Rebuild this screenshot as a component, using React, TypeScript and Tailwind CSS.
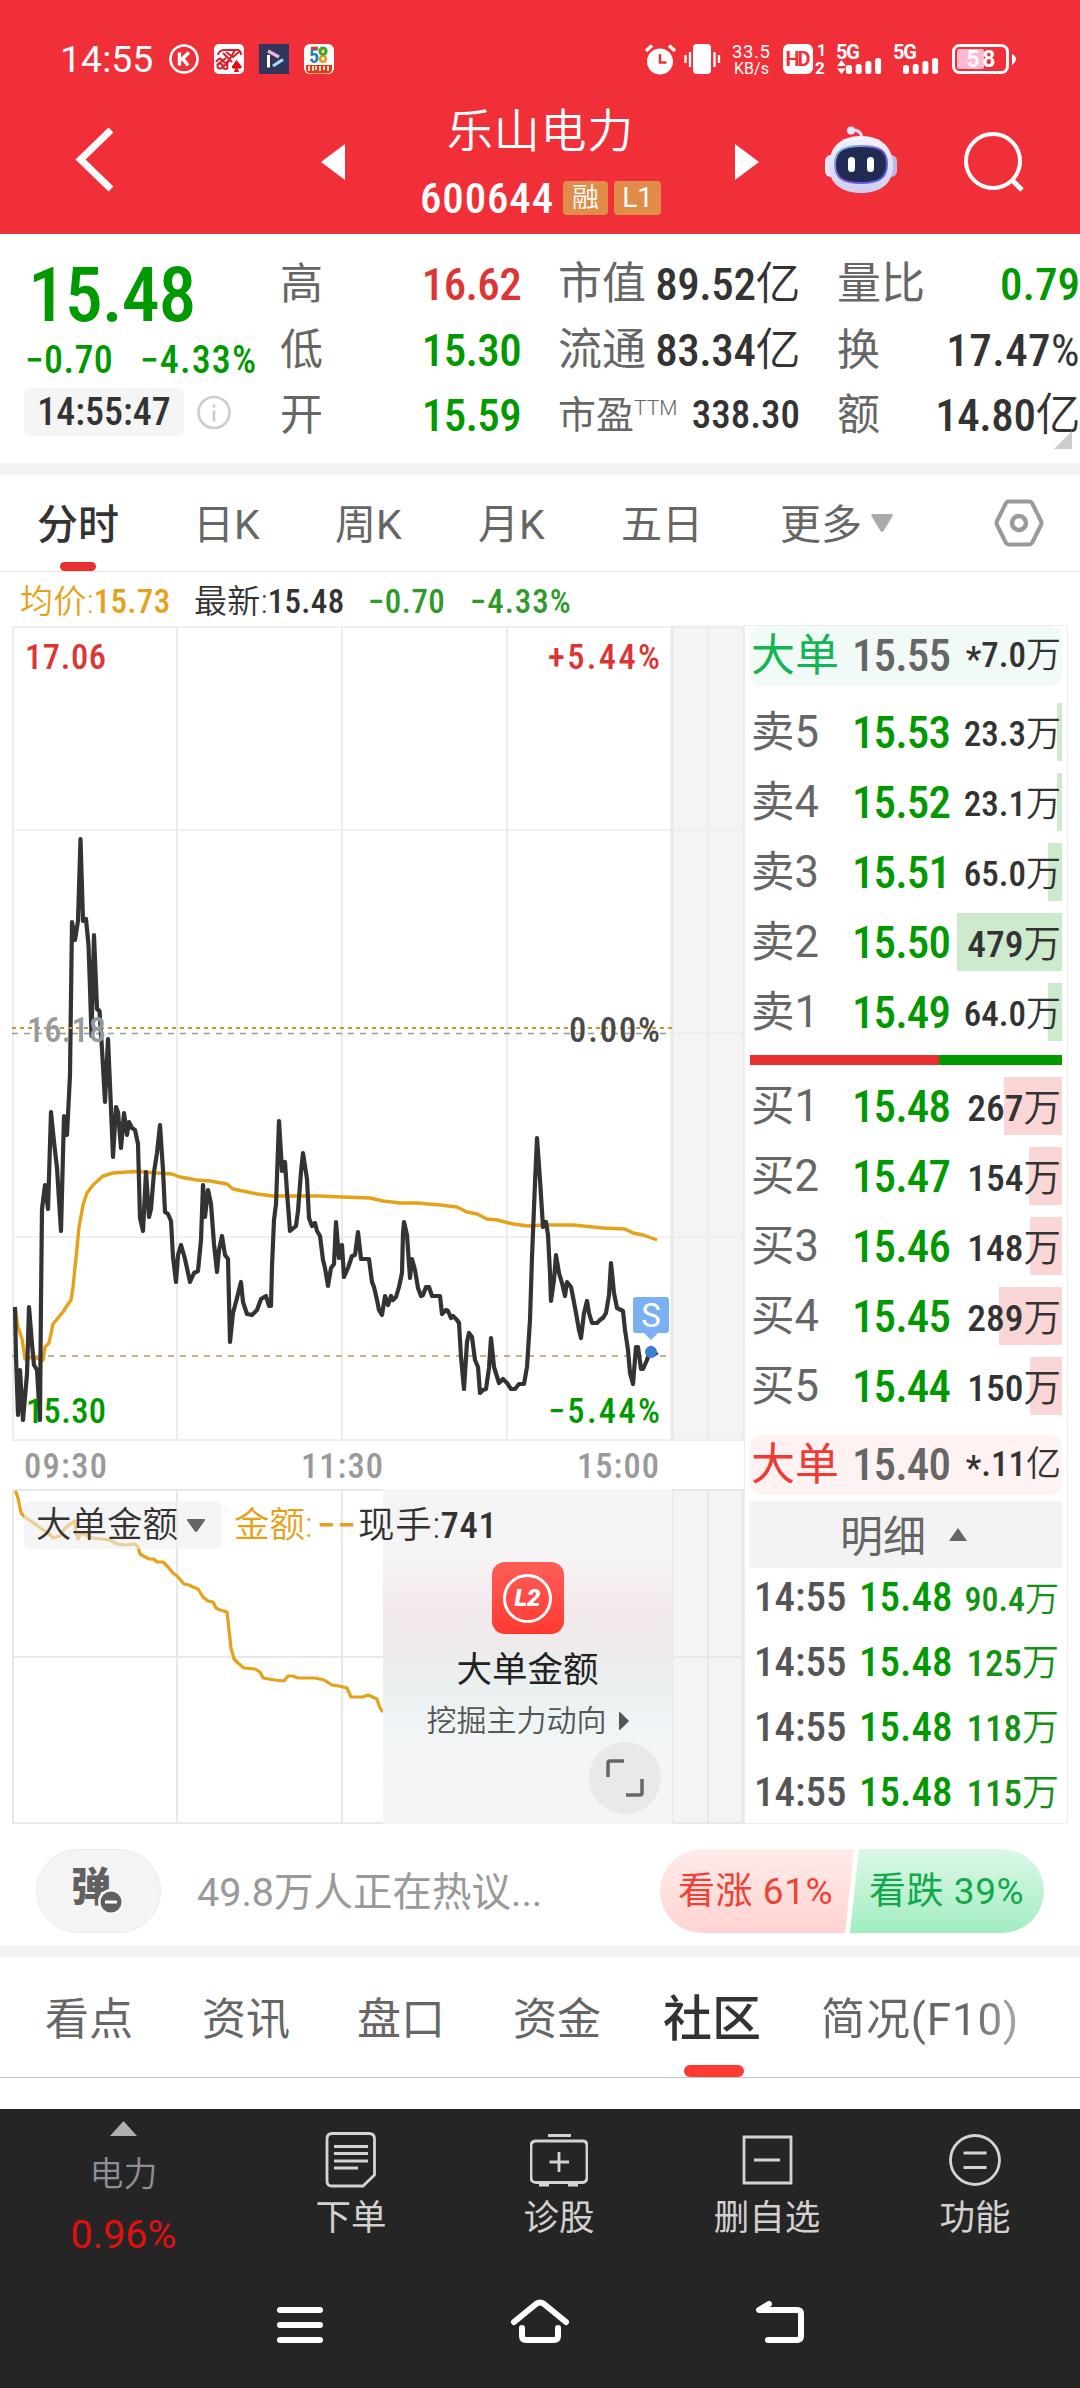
import type { ReactNode } from 'react';
import clsx from 'clsx';

const PRICE_LINE =
  '15,1307 16,1357 18,1415 20,1370 23,1420 27,1374 29,1307 32,1344 34,1365 37,1370 40,1420 41,1300 42,1209 45,1185 48,1209 51,1112 54,1142 57,1168 61,1231 64,1116 67,1135 70,1075 71,997 72,922 75,940 78,921 80.5,839 83,921 86,919 88.5,945 90,988 91.5,1036 94,935 97,1009 99.5,1011 102,1049 105,1102 108,1039 110.5,1097 113,1157 116,1107 118,1112 121,1148 124,1113 127,1135 129,1122 132,1128 135,1130 138,1144 140,1218 143,1231 146,1172 149,1217 151,1209 154,1172 157,1153 160,1125 163,1170 165,1212 168,1214 171,1221 173,1257 176,1282 178,1255 181,1245 185,1259 190,1282 194,1273 198,1271 201,1240 203,1185 205,1217 208,1190 211,1204 214,1244 217,1272 219,1250 222,1236 225,1255 228,1259 230,1342 233,1313 237,1298 241,1282 243,1302 247,1314 252,1315 257,1310 261,1299 266,1296 269,1306 271,1306 272,1266 274,1220 276,1204 279,1121 282,1171 285,1162 287,1192 290,1231 296,1226 298,1211 301,1172 303,1153 307,1179 309,1218 312,1226 315,1223 317,1231 320,1236 323,1260 325,1268 328,1286 331,1268 334,1264 336,1222 339,1258 342,1245 344,1277 348,1268 352,1256 355,1255 358,1232 361,1259 369,1259 372,1282 374,1287 377,1300 379,1310 382,1315 385,1296 388,1305 391,1296 393,1300 396,1297 399,1287 402,1273 403,1233 404,1222 407,1235 410,1278 412,1259 415,1270 418,1288 421,1296 423,1295 426,1287 429,1287 432,1296 440,1296 442,1314 446,1310 448,1311 451,1318 453,1316 457,1320 459,1323 461,1357 464,1389 467,1342 469,1333 472,1337 475,1360 478,1367 480,1393 483,1390 486,1389 489,1368 491,1338 494,1367 499,1383 503,1379 507,1383 511,1389 515,1389 519,1384 524,1384 527,1367 530,1320 532,1257 535,1183 537,1138 540,1180 543,1227 546,1222 548,1235 550,1273 551,1301 554,1280 556,1255 559,1273 562,1283 565,1296 567,1282 571,1287 573,1297 576,1313 579,1330 581,1338 584,1313 587,1301 589,1313 592,1323 597,1323 601,1319 603,1318 606,1313 609,1295 611,1263 614,1293 617,1308 623,1311 625,1330 628,1350 630,1373 633,1384 636,1347 638,1347 641,1369 643,1369 647,1360 651,1348 657,1355';

const AVG_LINE =
  '15,1307 18,1327 22,1339 25,1359 33,1357 43,1360 45,1347 49,1343 53,1324 58,1318 63,1312 68,1304 71,1300 73,1287 77,1248 79,1227 83,1205 87,1193 93,1185 103,1176 113,1173 127,1172 138,1171.5 157,1173 172,1174 180,1177 197,1180 210,1181 227,1184 233,1189 257,1194 273,1196 320,1196 342,1197 370,1198 383,1201 400,1203 417,1203 440,1205 457,1207 467,1212 477,1214 487,1219 497,1220 513,1224 528,1226 543,1225 573,1225 603,1228 625,1229 633,1233 643,1235 657,1240';

const FLOW_LINE =
  '15.5,1491 18,1498 21,1513 26,1518 34,1523 40,1528 48,1533 53,1538 60,1536 65,1528 75,1521 76,1532 78,1539 81,1533 93,1538 110,1540 117,1544 126,1545 135,1544 138,1547 140,1554 149,1559 154,1559 157,1562 163,1562 168,1567 173,1573 177,1576 184,1584 189,1585 193,1587 198,1589 203,1597 208,1601 213,1602 216,1608 220,1610 227,1612 229,1630 231,1648 234,1659 238,1663 244,1668 255,1669 260,1672 263,1678 275,1680 284,1681 288,1676 293,1676 298,1678 315,1678 324,1680 332,1685 339,1686 347,1688 351,1697 363,1697 368,1695 377,1699 380,1708 383,1712';

const SELLS = [
  { label: '卖5', price: '15.53', amount: '23.3', depth: 5 },
  { label: '卖4', price: '15.52', amount: '23.1', depth: 5 },
  { label: '卖3', price: '15.51', amount: '65.0', depth: 14 },
  { label: '卖2', price: '15.50', amount: '479', depth: 105 },
  { label: '卖1', price: '15.49', amount: '64.0', depth: 14 },
];

const BUYS = [
  { label: '买1', price: '15.48', amount: '267', depth: 58 },
  { label: '买2', price: '15.47', amount: '154', depth: 33 },
  { label: '买3', price: '15.46', amount: '148', depth: 32 },
  { label: '买4', price: '15.45', amount: '289', depth: 63 },
  { label: '买5', price: '15.44', amount: '150', depth: 32 },
];

const TRADES = ['90.4', '125', '118', '115'];

const COND = "font-['Roboto_Condensed','Noto_Sans_CJK_SC',sans-serif]";
const SANS = "font-['Roboto','Noto_Sans_CJK_SC',sans-serif]";

function Unit({ children }: { children: ReactNode }) {
  return <span className="font-[350]">{children}</span>;
}

function Bars({ x }: { x: number }) {
  return (
    <>
      <rect x={x} y="21" width="6" height="9" rx="2.5" />
      <rect x={x + 9.7} y="20" width="6" height="10" rx="2.5" />
      <rect x={x + 19.4} y="17" width="6" height="13" rx="2.5" />
      <rect x={x + 29.1} y="14" width="6" height="16" rx="2.5" />
    </>
  );
}

function StatusBar() {
  return (
    <div className="flex h-[118px] items-start pt-[44px] pl-[60px] text-white">
      <span className="-mt-[8px] w-[109px] font-['Roboto'] text-[37.500px] leading-[47px]">14:55</span>
      <div className="flex w-[536px] gap-[15px]">
        <svg width="30" height="30" viewBox="0 0 30 30" fill="none" stroke="white">
          <circle cx="15" cy="15" r="13.5" strokeWidth="2.6" />
          <path d="M10.5 8.5V21.5M20 8.5L12 16M13.5 14L19 21.5" strokeWidth="3.4" />
        </svg>
        <svg width="30" height="30" viewBox="0 0 30 30">
          <rect width="30" height="30" rx="5" fill="white" />
          <g fill="none" stroke="#d8202c" strokeWidth="2">
            <path d="M4 11Q5 6 11 6H21Q27 5 27 11M2 18Q6 12 9 17T16 14M3 21L12 14M5 14L14 21M9 9L18 18M12 8L19 13L25 8M21 6L13 20" />
            <circle cx="6" cy="22" r="2.5" />
            <circle cx="11.5" cy="23" r="2" />
          </g>
          <path d="M22.5 16L28 23Q26 26 23.5 24L25 28H20L21.500 24Q19 26 17.500 23Z" fill="#e30613" />
        </svg>
        <svg width="30" height="30" viewBox="0 0 30 30">
          <rect width="30" height="30" fill="#33365c" />
          <path d="M9.500 11V23.500" stroke="white" strokeWidth="3" />
          <path d="M9 7L20 13" stroke="#f3b3d8" strokeWidth="3.200" />
          <path d="M14 22L24 15.500" stroke="#9fdcf8" strokeWidth="3.200" />
        </svg>
        <svg width="30" height="30" viewBox="0 0 30 30">
          <rect width="30" height="30" rx="6" fill="white" />
          <text x="5" y="18.500" fontSize="20" fill="#2080c8" className="font-['Roboto_Condensed'] font-bold">5</text>
          <path d="M7 4H14" stroke="#e23a12" strokeWidth="2.600" />
          <text x="14" y="18.500" fontSize="20" fill="#e09a20" className="font-['Roboto_Condensed'] font-bold">8</text>
          <circle cx="19" cy="7" r="3.300" fill="none" stroke="#35a82e" strokeWidth="2.600" />
          <path d="M2 21H28V25Q28 29.500 22 29.500H8Q2 29.500 2 25Z" fill="#e23a12" />
          <path d="M5 22V27M9 22V27M12 22V26M16 22V27M20 22V26M24 22V27" stroke="white" strokeWidth="1.600" />
        </svg>
      </div>
      <svg width="380" height="46" viewBox="645 -8 380 46" fill="white" className="-mt-[8px] -ml-[60px]">
        <circle cx="660" cy="17.5" r="13" />
        <path d="M646 7L652 1.500M669 1.500L675 7" stroke="white" strokeWidth="3.500" />
        <path d="M660 10V18.500H666.500" stroke="#f12f38" strokeWidth="2.400" fill="none" />
        <rect x="693" y="0" width="18" height="30" rx="4" />
        <path d="M685.500 11V19M690 8V23M714.500 8V23M719 11V19" stroke="white" strokeWidth="2.300" />
        <text x="732" y="13.500" fontSize="18.500" textLength="38" className="font-['Roboto']">33.5</text>
        <text x="734" y="30" fontSize="16" textLength="35" className="font-['Roboto']">KB/s</text>
        <rect x="783" y="0" width="30" height="30" rx="6" />
        <text x="798" y="22" fontSize="20" textLength="25" textAnchor="middle" fill="#f12f38" className="font-['Roboto'] font-bold">HD</text>
        <text x="817" y="12" fontSize="16" className="font-['Roboto'] font-bold">1</text>
        <text x="815" y="30" fontSize="17" className="font-['Roboto'] font-bold">2</text>
        <text x="836" y="14.500" fontSize="20" textLength="24" className="font-['Roboto'] font-bold">5G</text>
        <path d="M837 22L841.500 16L846 22ZM837 24.500L841.500 30L846 24.500Z" />
        <Bars x={846} />
        <text x="893" y="14.500" fontSize="20" textLength="24" className="font-['Roboto'] font-bold">5G</text>
        <Bars x={903} />
        <rect x="953.500" y="1.500" width="54" height="27" rx="6" fill="none" stroke="white" strokeWidth="3" />
        <rect x="957" y="5" width="27" height="20" rx="2" fill="#ffb8cf" />
        <path d="M1012 10Q1016 12 1016 15T1012 21Z" />
        <text x="981" y="23" fontSize="23" textLength="29" textAnchor="middle" className="font-['Roboto'] font-bold">58</text>
      </svg>
    </div>
  );
}

function Robot() {
  return (
    <svg width="74" height="68" viewBox="0 0 74 68">
      <defs>
        <linearGradient id="shell" x1="0" y1="0" x2="0" y2="1">
          <stop offset="0" stopColor="#f6f3fd" />
          <stop offset="1" stopColor="#cfcdf0" />
        </linearGradient>
        <linearGradient id="rim" x1="0" y1="0" x2="1" y2="1">
          <stop offset="0" stopColor="#7fd6ee" />
          <stop offset=".5" stopColor="#7a4fd8" />
          <stop offset="1" stopColor="#4e63e8" />
        </linearGradient>
      </defs>
      <path d="M27 4Q37 3 38 12" fill="none" stroke="#dcd8f5" strokeWidth="3" />
      <circle cx="27" cy="4.500" r="4" fill="#ece8fb" />
      <rect x="1" y="29" width="12" height="22" rx="6" fill="#e8e5fa" />
      <rect x="61" y="29" width="12" height="22" rx="6" fill="#b9bbe6" />
      <path d="M37 10C58 10 69 22 69 40C69 58 56 67 37 67S5 58 5 40C5 22 16 10 37 10Z" fill="url(#shell)" />
      <path d="M37 20C56 20 63 25 63 38C63 52 55 57 37 57S11 52 11 38C11 25 18 20 37 20Z" fill="#202a52" stroke="url(#rim)" strokeWidth="2" />
      <rect x="24" y="31" width="7" height="15" rx="3.500" fill="white" />
      <rect x="43" y="31" width="7" height="15" rx="3.500" fill="white" />
    </svg>
  );
}

function Header() {
  return (
    <header className="h-[234px] bg-[#f12f38] text-white">
      <StatusBar />
      {/* title bar */}
      <div className="-mt-[18px] flex h-[124px] items-start">
        <svg width="48" height="66" viewBox="0 0 48 66" fill="none" stroke="white" strokeWidth="7" className="mt-[26px] ml-[71px]">
          <path d="M40 4L9.500 33.500L40 63" />
        </svg>
        <svg width="24" height="36" viewBox="0 0 24 36" fill="white" className="mt-[44px] ml-[202px]">
          <path d="M24 0V36L0 18Z" />
        </svg>
        <div className="ml-[58px] flex w-[275px] flex-col items-center">
          <div className={clsx('mt-[1px] text-[46px] leading-[60px] font-[350] tracking-[0.015em]', SANS)}>乐山电力</div>
          <div className={clsx('mt-[10px] flex h-[54px] items-center gap-[6px]', COND)}>
            <span className="mr-[3px] text-[43px] leading-[54px] font-medium tracking-[0.02em]">600644</span>
            <span className="flex h-[34px] w-[45px] items-center justify-center rounded-[4px] bg-[#e28c4a] text-[27px] leading-[34px] font-[350]">融</span>
            <span className="flex h-[34px] w-[47px] items-center justify-center rounded-[4px] bg-[#e28c4a] font-['Roboto'] text-[28px] leading-[34px]">L1</span>
          </div>
        </div>
        <svg width="24" height="36" viewBox="0 0 24 36" fill="white" className="mt-[44px] ml-[57px]">
          <path d="M0 0V36L24 18Z" />
        </svg>
        <div className="mt-[26px] ml-[65px]">
          <Robot />
        </div>
        <svg width="62" height="62" viewBox="0 0 62 62" fill="none" stroke="white" strokeWidth="4" className="mt-[31px] ml-[66px]">
          <circle cx="29" cy="30" r="27" />
          <path d="M48 49L58 59" strokeWidth="5" />
        </svg>
      </div>
    </header>
  );
}

function Quote() {
  return (
    <section className={clsx('flex h-[229px] pt-[18px] text-[#333]', COND)}>
      <div className="w-[280px]">
        <div className="ml-[28px] h-[86px] text-[76px] leading-[86px] font-medium tracking-[-0.015em] text-[#009900]">15.48</div>
        <div className="flex h-[42px] text-[38px] leading-[44px] font-medium text-[#009900]">
          <span className="ml-[25px] w-[115px] tracking-[0.01em]">−0.70</span>
          <span className="tracking-[0.03em]">−4.33%</span>
        </div>
        <div className="mt-[8px] flex h-[48px] items-center">
          <span className="ml-[24px] flex h-[48px] w-[160px] items-center justify-center rounded-[6px] bg-[#f5f5f5] text-[38px] leading-[48px] font-medium">14:55:47</span>
          <svg width="34" height="35" viewBox="0 0 34 35" fill="none" stroke="#ccc" className="ml-[13px]">
            <circle cx="17" cy="17.500" r="15.500" strokeWidth="2.600" />
            <path d="M17 15.500V26.500M17 9.500V12.500" strokeWidth="2.800" />
          </svg>
        </div>
      </div>
      <div className="w-[241px] text-[45px] leading-[65.500px] font-medium">
        {[
          ['高', '16.62', 'text-[#dc3535]'],
          ['低', '15.30', 'text-[#009900]'],
          ['开', '15.59', 'text-[#009900]'],
        ].map(([k, v, c]) => (
          <div key={k} className="flex justify-between">
            <span className="text-[43px] font-normal text-[#666]">{k}</span>
            <span className={clsx('tracking-[-0.015em]', c)}>{v}</span>
          </div>
        ))}
      </div>
      <div className="ml-[37px] w-[242px] text-[45px] leading-[65.500px] font-medium">
        <div className="flex justify-between">
          <span className="text-[44px] font-normal text-[#666]">市值</span>
          <span className="tracking-[-0.01em]">89.52<Unit>亿</Unit></span>
        </div>
        <div className="flex justify-between">
          <span className="text-[44px] font-normal text-[#666]">流通</span>
          <span className="tracking-[-0.01em]">83.34<Unit>亿</Unit></span>
        </div>
        <div className="flex justify-between">
          <span className="text-[38px] font-normal text-[#666]">
            市盈<span className="relative -top-[13px] font-['Roboto'] text-[21px] font-light">TTM</span>
          </span>
          <span className="text-[39px]">338.30</span>
        </div>
      </div>
      <div className="relative ml-[37px] w-[243px] text-[45px] leading-[65.500px] font-medium">
        <div className="flex justify-between">
          <span className="text-[44px] font-normal text-[#666]">量比</span>
          <span className="text-[#009900]">0.79</span>
        </div>
        <div className="flex justify-between">
          <span className="text-[43px] font-normal text-[#666]">换</span>
          <span className="tracking-[0.01em]">17.47<span className="font-normal">%</span></span>
        </div>
        <div className="flex justify-between">
          <span className="text-[43px] font-normal text-[#666]">额</span>
          <span className="tracking-[-0.01em]">14.80<Unit>亿</Unit></span>
        </div>
        <svg width="18" height="18" viewBox="0 0 18 18" fill="#ccc" className="absolute top-[179px] right-[8px]">
          <path d="M18 0V18H0Z" />
        </svg>
      </div>
    </section>
  );
}

function PeriodTabs() {
  return (
    <nav className={clsx('flex h-[97px] items-center border-b border-[#e4e4e4] text-[41px] leading-[100px] text-[#666]', SANS)}>
      <div className="relative ml-[37px] h-[96px] w-[156px] font-medium text-[#333]">
        分时
        <span className="absolute bottom-0 left-[23px] h-[9px] w-[36px] rounded-full bg-[#e93030]" />
      </div>
      <span className="h-[96px] w-[142px]">日K</span>
      <span className="h-[96px] w-[143px]">周K</span>
      <span className="h-[96px] w-[143px]">月K</span>
      <span className="h-[96px] w-[159px]">五日</span>
      <span className="h-[96px] w-[91px]">更多</span>
      <svg width="22" height="18" viewBox="0 0 22 18" fill="#aaa">
        <path d="M2 0H20Q23 0 21 3L12.500 17Q11 19 9.500 17L1 3Q-1 0 2 0Z" />
      </svg>
      <svg width="50" height="48" viewBox="0 0 50 48" fill="none" stroke="#999" strokeWidth="4" strokeLinejoin="round" className="ml-[101px]">
        <path d="M15 2.500H35Q37 2.500 38 4L47 22Q48 24 47 26L38 44Q37 45.500 35 45.500H15Q13 45.500 12 44L3 26Q2 24 3 22L12 4Q13 2.500 15 2.500Z" />
        <circle cx="25" cy="24" r="7" strokeWidth="4.500" />
      </svg>
    </nav>
  );
}

function Legend() {
  return (
    <div className={clsx('flex h-[53px] text-[33px] leading-[60px] font-medium text-[#333]', COND)}>
      <span className="ml-[20px] w-[174px] tracking-[0.01em] text-[#e5a118]"><Unit>均价:</Unit>15.73</span>
      <span className="w-[174px] tracking-[0.01em]"><Unit>最新:</Unit>15.48</span>
      <span className="w-[102px] text-[33px] tracking-[0.015em] text-[#2f9a2a]">−0.70</span>
      <span className="text-[33px] tracking-[0.03em] text-[#2f9a2a]">−4.33%</span>
    </div>
  );
}

function PriceChart() {
  return (
    <svg width="744" height="864" viewBox="0 625 744 864" fill="none" className={COND}>
      <rect x="671" y="625" width="73" height="816" fill="#f4f4f4" />
      <g stroke="#ececec" strokeWidth="2">
        <path d="M13 627V1441M177 627V1440M342 627V1440M507 627V1440M708 627V1440M743 627V1440" />
        <path d="M12 627H744M12 830H744M672 1033H744M12 1237H744M12 1440H744" strokeWidth="1.500" />
        <path d="M672 626V1441" stroke="#e8e8e8" strokeWidth="3" />
      </g>
      <path d="M12 1033.500H668" stroke="#999" strokeWidth="1.500" strokeDasharray="6 6" />
      <path d="M12 1356H668" stroke="#b39a66" strokeWidth="1.500" strokeDasharray="6 6" />
      <polyline points={AVG_LINE} stroke="#e5a118" strokeWidth="3.400" strokeLinejoin="round" />
      <polyline points={PRICE_LINE} stroke="#333" strokeWidth="4.200" strokeLinejoin="round" />
      <path d="M12 1028H672" stroke="#cf8f35" strokeWidth="2" strokeDasharray="4 4" />
      <circle cx="651" cy="1352" r="6" fill="#3f7fd0" />
      <g fontSize="34.500" className="font-medium">
        <text x="25" y="669" textLength="81" fill="#dc3535">17.06</text>
        <text x="548" y="669" textLength="112" fill="#dc3535">+5.44%</text>
        <text x="27" y="1042" textLength="79" fill="#999">16.18</text>
        <text x="569" y="1042" textLength="91" fill="#4a4a4a">0.00%</text>
        <text x="26" y="1423" textLength="80" fill="#009900">15.30</text>
        <text x="548" y="1423" textLength="112" fill="#009900">−5.44%</text>
        <g fill="#999">
          <text x="24" y="1478" textLength="83">09:30</text>
          <text x="301" y="1478" textLength="82">11:30</text>
          <text x="577" y="1478" textLength="82">15:00</text>
        </g>
      </g>
      {/* sell marker */}
      <path d="M636 1297H666Q669 1297 669 1300V1330Q669 1333 666 1333H658L651 1340L644 1333H636Q633 1333 633 1330V1300Q633 1297 636 1297Z" fill="#7aaff2" />
      <text x="651" y="1327" fontSize="33" textAnchor="middle" fill="white" className="font-['Roboto']">S</text>
    </svg>
  );
}

function FlowChart() {
  return (
    <div className="relative h-[335px] w-[744px]">
      <svg width="744" height="335" viewBox="0 1489 744 335" fill="none" className="absolute inset-0">
        <rect x="671" y="1489" width="73" height="335" fill="#f4f4f4" />
        <path d="M12 1490H744M12 1657H744M12 1823H744M13 1490V1823M177 1490V1823M342 1490V1823M672 1490V1823M708 1490V1823M743 1490V1823" stroke="#e8e8e8" strokeWidth="2" />
        <polyline points={FLOW_LINE} stroke="#e5a118" strokeWidth="3.200" strokeLinejoin="round" />
      </svg>

      {/* level 2 promo */}
      <div className="absolute top-0 left-[383px] flex h-[335px] w-[289px] flex-col items-center bg-[linear-gradient(180deg,#f5f5f5_0%,#f6f3f5_20%,#f2e9ec_38%,#eeebea_48%,#eaeff0_58%,#eff5f6_70%,#f4f5f7_80%,#f6f3f6_100%)]">
        <div className="mt-[73px] flex h-[72px] w-[72px] items-center justify-center rounded-[13px] bg-gradient-to-b from-[#ff5d57] to-[#ff3830]">
          <span className="flex h-[49px] w-[49px] items-center justify-center rounded-full border-[3px] border-white font-['Roboto'] text-[24px] leading-[30px] font-black text-white italic">L2</span>
        </div>
        <div className={clsx('mt-[11px] text-[35.500px] leading-[50px] text-[#222]', SANS)}>大单金额</div>
        <div className={clsx('mt-[3px] flex items-center gap-[12px] text-[30px] leading-[46px] font-[350] text-[#555]', SANS)}>
          挖掘主力动向
          <svg width="10" height="18" viewBox="0 0 10 18" fill="#555">
            <path d="M0 1Q0 0 1 0L10 9L1 18Q0 18 0 17Z" />
          </svg>
        </div>
        <div className="absolute right-[11px] bottom-[10px] flex h-[72px] w-[72px] items-center justify-center rounded-full bg-[#e9e9e9]">
          <svg width="38" height="38" viewBox="0 0 38 38" fill="none" stroke="#666" strokeWidth="3.500">
            <path d="M2 18V4Q2 2 4 2H18M36 20V34Q36 36 34 36H20" />
          </svg>
        </div>
      </div>

      <div className={clsx('relative flex h-[60px] pt-[12px] pl-[24px] text-[35.500px] leading-[49px] whitespace-nowrap text-[#333]', COND)}>
        <div className="flex h-[48px] w-[198px] shrink-0 items-center gap-[9px] rounded-[6px] bg-[#eeeeee]/60 pl-[12px] font-[350]">
          大单金额
          <svg width="18" height="13" viewBox="0 0 18 13" fill="#666">
            <path d="M1 0H17Q19 0 17.500 2L10.500 12Q9 14 7.500 12L.5 2Q-1 0 1 0Z" />
          </svg>
        </div>
        <span className="ml-[12px] w-[83px] font-[350] text-[#e5a118]">金额:</span>
        <span className="w-[41px] text-[38px] font-medium tracking-[0.04em] text-[#e5a118]">−−</span>
        <span className="text-[36.500px] font-medium tracking-[0.02em]"><Unit>现手:</Unit>741</span>
      </div>
    </div>
  );
}

// Amounts without a decimal are set a little larger
function Amount({ value }: { value: string }) {
  return (
    <span className={clsx('relative pt-[5px] leading-[53px]', value.includes('.') ? 'text-[35px]' : 'text-[37.500px]')}>
      {value}<Unit>万</Unit>
    </span>
  );
}

function Level({ label, price, amount, depth, side }: { label: string; price: string; amount: string; depth: number; side: 'sell' | 'buy' }) {
  return (
    <div className="relative mb-[12px] flex h-[58px] items-center pl-[1px] leading-[59px]">
      <span
        className={clsx('absolute top-0 right-0 h-full', side === 'sell' ? 'bg-[#cdeacd]' : 'bg-[#fad6d6]')}
        style={{ width: depth }}
      />
      <span className={clsx('relative w-[101px] text-[43.500px] text-[#666]', SANS)}>{label}</span>
      <span className="relative text-[45px] font-medium tracking-[-0.02em] text-[#009900]">{price}</span>
      <div className="ml-auto flex pr-[1px] font-medium text-[#333]">
        <Amount value={amount} />
      </div>
    </div>
  );
}

function BigOrder({ price, amount, unit, side }: { price: string; amount: string; unit: string; side: 'sell' | 'buy' }) {
  return (
    <div className={clsx('flex h-[60px] items-center rounded-[12px] pl-[1px] leading-[58px]', side === 'sell' ? 'bg-[#f1faf6]' : 'bg-[#fef3f2]')}>
      <span className={clsx('w-[101px] text-[44px]', side === 'sell' ? 'text-[#12b454]' : 'text-[#f03a34]')}>大单</span>
      <span className="text-[45px] font-medium tracking-[-0.02em] text-[#666]">{price}</span>
      <span className="ml-auto flex pt-[4px] pr-[1px] text-[35px] leading-[54px] font-medium text-[#333]">
        <span className="pt-[4px]">*</span>{amount}<Unit>{unit}</Unit>
      </span>
    </div>
  );
}

function OrderBook() {
  return (
    <aside className={clsx('flex h-[1199px] w-[324px] flex-col border border-[#eee] px-[5px]', COND)}>
      <BigOrder side="sell" price="15.55" amount="7.0" unit="万" />
      <div className="mt-[17px]">
        {SELLS.map((l) => <Level key={l.label} {...l} side="sell" />)}
      </div>
      <div className="mt-[2px] flex h-[10px] shrink-0">
        <span className="w-[189px] bg-[#e93030]" />
        <span className="flex-1 bg-[#009900]" />
      </div>
      <div className="mt-[12px]">
        {BUYS.map((l) => <Level key={l.label} {...l} side="buy" />)}
      </div>
      <div className="mt-[8px]">
        <BigOrder side="buy" price="15.40" amount=".11" unit="亿" />
      </div>
      <div className="mt-[6px] flex h-[67px] shrink-0 items-center bg-[#f3f3f3] pl-[90px] text-[43px] text-[#666]">
        <span className="pt-[6px] leading-[61px]">明细</span>
        <svg width="18" height="13" viewBox="0 0 18 13" fill="#666" className="ml-[23px]">
          <path d="M9 0L18 13H0Z" />
        </svg>
      </div>
      <div className="-mt-[4px]">
        {TRADES.map((amount) => (
          <div key={amount} className="flex h-[65px] items-center pr-[3px] pl-[4px] text-[41px] leading-[60px] font-medium">
            <span className="w-[105px] text-[#555]">14:55</span>
            <span className="text-[#009900]">15.48</span>
            <span className={clsx('ml-auto pt-[4px] leading-[56px] text-[#149214]', amount.includes('.') ? 'text-[34px]' : 'text-[37px]')}>
              {amount}<Unit>万</Unit>
            </span>
          </div>
        ))}
      </div>
    </aside>
  );
}

function Sentiment() {
  return (
    <section className={clsx('flex h-[121px] items-start pt-[25px]', SANS)}>
      <div className="relative ml-[36px] h-[84px] w-[125px] rounded-full border border-[#ececec] bg-[#f4f4f4] pt-[12px] pl-[34px] text-[40px] leading-[52px] font-black text-[#606060]">
        弹
        <svg width="26" height="26" viewBox="0 0 26 26" className="absolute top-[39px] left-[61px]">
          <circle cx="13" cy="13" r="13" fill="#f7f7f7" />
          <circle cx="13" cy="13" r="10.500" fill="#606060" />
          <path d="M7 13H19" stroke="white" strokeWidth="3" />
        </svg>
      </div>
      <span className="ml-[36px] w-[463px] text-[39.500px] leading-[88px] text-[#999]">49.8万人正在热议...</span>
      <div className="flex h-[84px] w-[384px] overflow-hidden rounded-full text-[37px] leading-[85px] tracking-[0.015em]">
        <span className="w-[194px] bg-gradient-to-b from-[#ffeceb] to-[#ffd3d0] pl-[18px] text-[#ef4136] [clip-path:polygon(0_0,100%_0,95.400%_100%,0_100%)]">看涨 61%</span>
        <span className="-ml-[4px] w-[194px] bg-gradient-to-b from-[#dcf8e8] to-[#a1edc0] pl-[19px] text-[#12a84c] [clip-path:polygon(4.600%_0,100%_0,100%_100%,0_100%)]">看跌 39%</span>
      </div>
    </section>
  );
}

function SectionTabs() {
  return (
    <nav className="h-[152px]">
      <div className={clsx('flex h-[121px] border-b border-[#c4c4c4] text-[44px] leading-[126px] text-[#666]', SANS)}>
        <span className="ml-[45px] w-[157px]">看点</span>
        <span className="w-[155px]">资讯</span>
        <span className="w-[156px]">盘口</span>
        <span className="w-[150px]">资金</span>
        <span className="relative w-[158px] text-[49px] font-medium text-[#333]">
          社区
          <span className="absolute bottom-0 left-[21px] h-[12px] w-[60px] rounded-full bg-[#fb3a34]" />
        </span>
        <span className="self-start bg-gradient-to-r from-[#666] from-75% to-[#aaa] bg-clip-text tracking-[0.02em] text-transparent">简况(F10)</span>
      </div>
    </nav>
  );
}

function Action({ label, children }: { label: string; children: ReactNode }) {
  return (
    <div className="flex w-[208px] flex-col items-center pt-[21px]">
      <svg width="58" height="60" viewBox="0 0 58 60" fill="none" stroke="#d4d4d4" strokeWidth="2.800">
        {children}
      </svg>
      <span className="text-[35.500px] leading-[56px] text-[#d4d0d0]">{label}</span>
    </div>
  );
}

function BottomBar() {
  return (
    <footer className={clsx('h-[279px] bg-[#252525]', SANS)}>
      <div className="flex h-[170px]">
        <div className="flex w-[247px] flex-col items-center pt-[12px]">
          <svg width="27" height="15" viewBox="0 0 27 15" fill="#b0b0b0">
            <path d="M13.500 0L27 15H0Z" />
          </svg>
          <span className="mt-[13px] text-[34px] leading-[51px] font-[350] text-[#8e8e9a]">电力</span>
          <span className="mt-[8px] text-[39.500px] leading-[54px] text-[#e01010]">0.96%</span>
        </div>
        <Action label="下单">
          <path d="M10 3.500H47Q52.500 3.500 52.500 9V45L41 56H10Q5 56 5 51V9Q5 3.500 10 3.500Z" />
          <path d="M12 16.500H46M12 23.500H46M12 31H46M12 38H36" />
        </Action>
        <Action label="诊股">
          <path d="M5 11H53Q57 11 57 16V47Q57 52.500 52 52.500H6Q1 52.500 1 47V16Q1 11 6 11M18 5.500H41M29 22V42M19.500 32H39M9 55H19M38 55H48" />
        </Action>
        <Action label="删自选">
          <path d="M6 7H53V53H6ZM16 30H42" />
        </Action>
        <Action label="功能">
          <circle cx="29" cy="30" r="24.500" />
          <path d="M17.500 23H40.500M17.500 37.500H40.500" />
        </Action>
      </div>
      {/* system navigation */}
      <div className="flex pt-[17px] pl-[274px]">
        <svg width="532" height="52" viewBox="274 2296 532 52" fill="none" stroke="white" strokeWidth="6" strokeLinecap="round" strokeLinejoin="round">
          <path d="M280 2310H320M280 2325H320M280 2340H320" />
          <path d="M514 2322L536 2304Q540 2301 544 2304L566 2322M522 2328V2336Q522 2340 526 2340H554Q558 2340 558 2336V2328" />
          <path d="M769 2304L759 2310H797Q801 2310 801 2314V2336Q801 2340 797 2340H768" />
        </svg>
      </div>
    </footer>
  );
}

export default function App() {
  return (
    <div className="h-[2388px] w-[1080px] overflow-hidden bg-white">
      <Header />
      <Quote />
      <div className="h-[12px] bg-[#f3f3f3]" />
      <PeriodTabs />
      <Legend />
      <div className="flex h-[1199px]">
        <div className="flex w-[744px] flex-col">
          <PriceChart />
          <FlowChart />
        </div>
        <OrderBook />
      </div>
      <Sentiment />
      <div className="h-[12px] bg-[#f3f3f3]" />
      <SectionTabs />
      <BottomBar />
    </div>
  );
}
